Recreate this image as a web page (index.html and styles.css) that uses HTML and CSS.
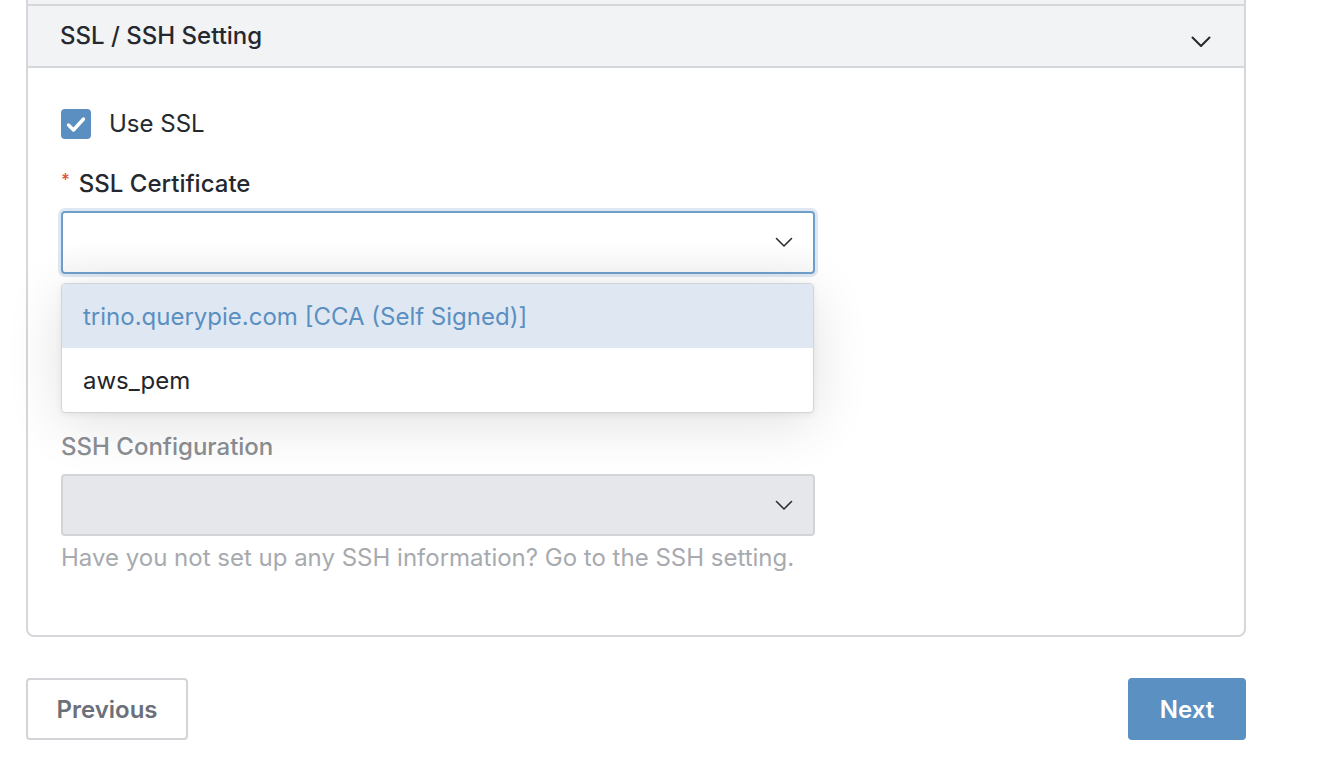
FILE: index.html
```html
<!DOCTYPE html>
<html lang="en">
<head>
<meta charset="utf-8">
<title>SSL / SSH Setting</title>
<link rel="stylesheet" href="styles.css">
</head>
<body>
<div class="page">
  <div class="prev-section"></div>
  <section class="panel">
    <header class="panel-header">
      <h2 class="panel-title">SSL / SSH Setting</h2>
      <svg class="header-chevron" width="20" height="12" viewBox="0 0 20 12"><path d="M1.5 1.5 L10 10 L18.5 1.5" fill="none" stroke="#25282d" stroke-width="2" stroke-linecap="round" stroke-linejoin="round"/></svg>
    </header>
    <div class="panel-body">
      <label class="check-row">
        <span class="checkbox">
          <svg width="30" height="30" viewBox="0 0 30 30"><path d="M7.5 16 L12.5 21 L22.5 10" fill="none" stroke="#fff" stroke-width="3.4" stroke-linecap="round" stroke-linejoin="round"/></svg>
        </span>
        <span class="check-label">Use SSL</span>
      </label>

      <div class="field field-cert">
        <div class="field-label"><span class="required">*</span>SSL Certificate</div>
        <div class="select-wrap">
          <div class="select select-focus">
            <svg class="select-chevron" width="18" height="11" viewBox="0 0 18 11"><path d="M1.5 1.5 L9 9 L16.5 1.5" fill="none" stroke="#2a2d32" stroke-width="1.6" stroke-linecap="round" stroke-linejoin="round"/></svg>
          </div>
          <ul class="dropdown">
            <li class="option option-active">trino.querypie.com [CCA (Self Signed)]</li>
            <li class="option">aws_pem</li>
          </ul>
        </div>
      </div>

      <div class="field field-ssh">
        <div class="field-label muted">SSH Configuration</div>
        <div class="select select-disabled">
          <svg class="select-chevron" width="18" height="11" viewBox="0 0 18 11"><path d="M1.5 1.5 L9 9 L16.5 1.5" fill="none" stroke="#2a2d32" stroke-width="1.6" stroke-linecap="round" stroke-linejoin="round"/></svg>
        </div>
        <p class="helper">Have you not set up any SSH information? Go to the SSH setting.</p>
      </div>
    </div>
  </section>

  <div class="actions">
    <button class="btn btn-secondary">Previous</button>
    <button class="btn btn-primary">Next</button>
  </div>
</div>
</body>
</html>
```

FILE: styles.css
```css
* { box-sizing: border-box; }

html, body {
  margin: 0;
  padding: 0;
  background: #ffffff;
}

body {
  font-family: Inter, "Noto Sans", "Liberation Sans", sans-serif;
  color: #24272d;
  width: 1338px;
  height: 758px;
  overflow: hidden;
}

.page {
  width: 1220px;
  margin-left: 26px;
}

.prev-section {
  height: 4px;
  background: #f2f3f5;
  border-left: 2px solid #d6d7da;
  border-right: 2px solid #d6d7da;
}

.panel {
  border: 2px solid #d6d7da;
  border-radius: 0 0 8px 8px;
  background: #fff;
}

.panel-header {
  height: 62px;
  background: #f2f3f5;
  border-bottom: 2px solid #d6d7da;
  display: flex;
  align-items: center;
  justify-content: space-between;
  padding: 0 33px 0 32px;
}

.panel-title {
  margin: 0;
  font-size: 24px;
  font-weight: 500;
  color: #25282e;
  line-height: 32px;
  margin-top: -1px;
}

.header-chevron {
  margin-top: 12px;
}

.panel-body {
  padding: 41px 32px 61px 33px;
}

.check-row {
  display: flex;
  align-items: center;
  gap: 18px;
  height: 30px;
}

.checkbox {
  width: 30px;
  height: 30px;
  border-radius: 4px;
  background: #5b8fc1;
  display: flex;
  align-items: center;
  justify-content: center;
}

.checkbox svg { display: block; }

.check-label {
  font-size: 24px;
  line-height: 32px;
  color: #25282e;
}

.field { width: 754px; }

.field-cert { margin-top: 29px; }

.field-label {
  font-size: 24px;
  font-weight: 500;
  line-height: 32px;
  color: #25282e;
  margin-bottom: 11px;
  display: flex;
  align-items: center;
}

.field-label.muted { color: #8b8e93; font-weight: 500; }

.required {
  color: #e0533f;
  font-size: 17px;
  margin-right: 9px;
  margin-top: -8px;
  font-weight: 500;
}

.select-wrap { position: relative; }

.select {
  height: 63px;
  border-radius: 4px;
  display: flex;
  align-items: center;
  justify-content: flex-end;
  padding-right: 20px;
}

.select-focus {
  border: 2px solid #6e9fcb;
  background: linear-gradient(#ffffff 50%, #f8f8f9);
  box-shadow: 0 0 0 3px #dfe8f2;
}

.select-disabled {
  height: 62px;
  border: 2px solid #d3d4d7;
  background: #e6e7ea;
}

.select-chevron { display: block; }

.dropdown {
  position: absolute;
  left: 0;
  right: 1px;
  top: calc(100% + 9px);
  margin: 0;
  padding: 0;
  list-style: none;
  background: #fff;
  border: 1px solid #d3d4d7;
  border-radius: 4px;
  box-shadow: 0 10px 56px rgba(0, 0, 0, 0.12), 0 2px 6px rgba(0, 0, 0, 0.06);
  overflow: hidden;
  z-index: 5;
}

.option {
  height: 64px;
  display: flex;
  align-items: center;
  padding-left: 21px;
  font-size: 24px;
  color: #23262b;
}

.option-active {
  background: #dfe8f2;
  color: #5a8fc1;
}

.field-ssh { margin-top: 157px; }

.helper {
  margin: 6px 0 0 0;
  font-size: 24px;
  line-height: 32px;
  color: #a7aaae;
  white-space: nowrap;
}

.actions {
  display: flex;
  justify-content: space-between;
  margin-top: 41px;
}

.btn {
  font-family: Inter, "Noto Sans", "Liberation Sans", sans-serif;
  font-size: 24px;
  font-weight: 600;
  height: 62px;
  border-radius: 4px;
  cursor: pointer;
}

.btn-secondary {
  width: 162px;
  background: #fff;
  border: 2px solid #d3d4d7;
  color: #6b7079;
}

.btn-primary {
  width: 118px;
  background: #5a90c2;
  border: none;
  color: #fff;
}
```
